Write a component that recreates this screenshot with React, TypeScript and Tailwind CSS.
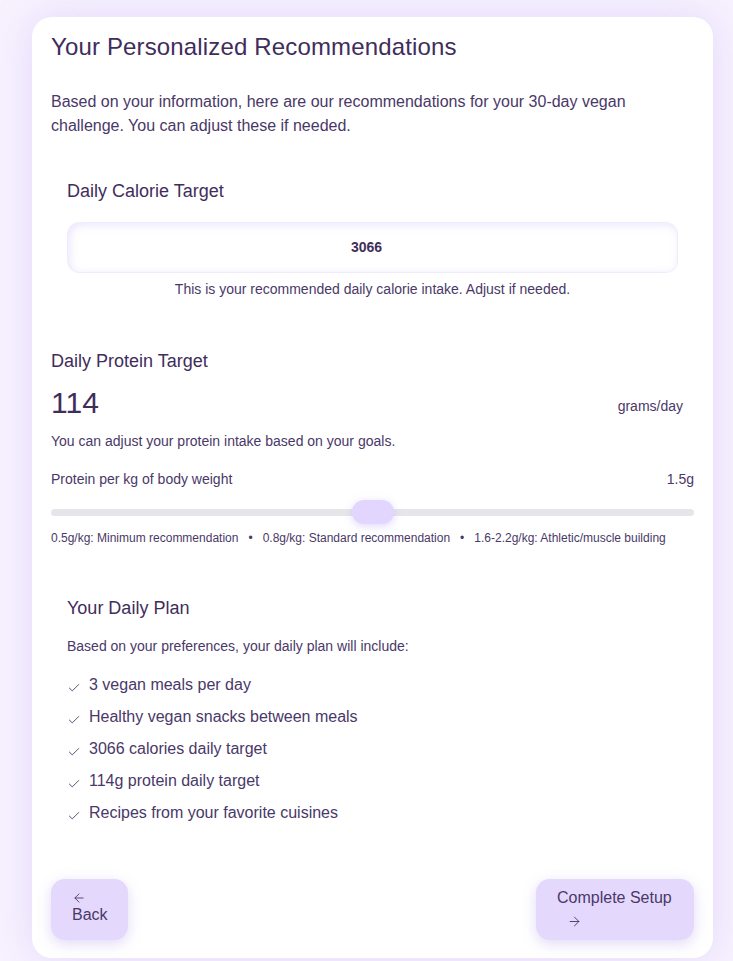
import { Check, ArrowLeft, ArrowRight } from 'lucide-react';

const planItems = [
  '3 vegan meals per day',
  'Healthy vegan snacks between meals',
  '3066 calories daily target',
  '114g protein daily target',
  'Recipes from your favorite cuisines',
];

const guide = [
  '0.5g/kg: Minimum recommendation',
  '0.8g/kg: Standard recommendation',
  '1.6-2.2g/kg: Athletic/muscle building',
];

export default function App() {
  const perKg = 1.5;
  const pct = ((perKg - 0.5) / 2) * 100;

  return (
    <div
      className="min-h-screen bg-[#f7f2fe] pt-[17px] pl-[32px] text-[#4a3868]"
      style={{ fontFamily: '"Liberation Sans", Arial, sans-serif' }}
    >
      <div className="w-[681px] rounded-[20px] bg-white px-[19px] pt-[14px] pb-[18px] shadow-[0_0_40px_rgba(190,160,245,0.3)]">
        {/* Header */}
        <h1 className="text-[24px] leading-8 font-medium tracking-[0.15px] text-[#3f2d5c]">Your Personalized Recommendations</h1>
        <p className="mt-[27px] text-[16px] leading-6">
          Based on your information, here are our recommendations for your 30-day vegan challenge. You can adjust
          these if needed.
        </p>

        {/* Calorie */}
        <div className="mt-[39px] px-4">
          <h2 className="text-[18px] leading-7 font-medium text-[#3f2d5c]">Daily Calorie Target</h2>
          <div className="mt-[17px] flex h-[51px] items-center justify-center rounded-[12px] border border-[#f1ecfc] pr-[12px] shadow-[inset_2px_2px_8px_rgba(205,190,250,0.4)]">
            <span className="text-[14px] font-bold text-[#3f2f5a]">3066</span>
          </div>
          <p className="mt-[6px] text-center text-[14px] leading-5">
            This is your recommended daily calorie intake. Adjust if needed.
          </p>
        </div>

        {/* Protein */}
        <div className="mt-[48px]">
          <h2 className="text-[18px] leading-7 font-medium text-[#3f2d5c]">Daily Protein Target</h2>
          <div className="mt-[10px] flex items-center justify-between pr-[11px]">
            <span className="text-[30px] leading-9 font-medium text-[#3f2d5c]">114</span>
            <span className="mt-[6px] text-[14px] leading-5">grams/day</span>
          </div>
          <p className="mt-[10px] text-[14px] leading-5">You can adjust your protein intake based on your goals.</p>
          <div className="mt-[18px] flex items-center justify-between text-[14px] leading-5">
            <span>Protein per kg of body weight</span>
            <span>{perKg}g</span>
          </div>
          <div className="relative mt-[11px] flex h-[24px] items-center">
            <div className="h-[7px] w-full rounded-full bg-[#e6e6ea]" />
            <div
              className="absolute top-0 h-[24px] w-[42px] -translate-x-1/2 rounded-full bg-[#e2d6fe] shadow-[0_2px_8px_rgba(170,140,240,0.35)]"
              style={{ left: `${pct}%` }}
            />
          </div>
          <div className="mt-[6px] flex items-center gap-[10px] text-[12px] leading-4">
            {guide.map((g, i) => (
              <span key={g} className="flex items-center gap-[10px]">
                {i > 0 && <span>•</span>}
                {g}
              </span>
            ))}
          </div>
        </div>

        {/* Daily plan */}
        <div className="mt-[48px] px-4">
          <h2 className="text-[18px] leading-7 font-medium text-[#3f2d5c]">Your Daily Plan</h2>
          <p className="mt-[14px] text-[14px] leading-5">Based on your preferences, your daily plan will include:</p>
          <ul className="mt-[17px] flex flex-col gap-2">
            {planItems.map((item) => (
              <li key={item} className="flex items-center text-[16px] leading-6">
                <Check size={14} strokeWidth={1.5} className="mt-[6px] mr-[8px] shrink-0" />
                {item}
              </li>
            ))}
          </ul>
        </div>

        {/* Actions */}
        <div className="mt-[54px] flex items-start justify-between">
          <button className="flex h-[61px] w-[77px] flex-col items-start justify-start rounded-[14px] bg-[#e4d8fd] px-[21px] pt-[12px] text-[16px] leading-[18px] text-[#4a3868] shadow-[0_4px_14px_rgba(160,130,230,0.3)]">
            <ArrowLeft size={14} strokeWidth={1.5} />
            <span className="mt-[1px]">Back</span>
          </button>
          <button className="flex h-[61px] w-[158px] flex-col items-start justify-start rounded-[14px] bg-[#e4d8fd] px-[21px] pt-[8px] text-[16px] leading-[22px] text-[#4a3868] shadow-[0_4px_14px_rgba(160,130,230,0.3)]">
            <span>Complete Setup</span>
            <ArrowRight size={15} strokeWidth={1.5} className="mt-[5px] ml-[10px]" />
          </button>
        </div>
      </div>
    </div>
  );
}
